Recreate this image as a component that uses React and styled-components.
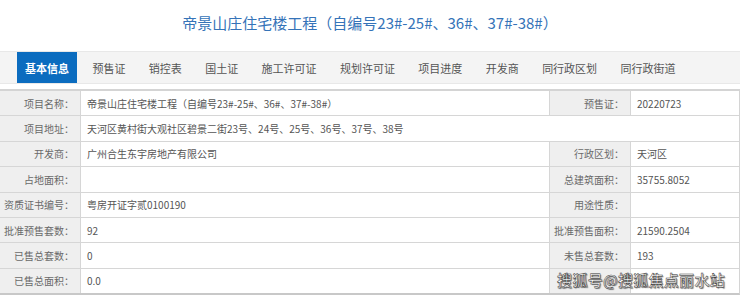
import React from 'react';
import styled, { createGlobalStyle } from 'styled-components';

const GlobalStyle = createGlobalStyle`
  html, body {
    margin: 0;
    padding: 0;
    background: #fff;
  }
  body {
    font-family: "Noto Sans CJK SC", "Noto Sans", sans-serif;
    width: 740px;
    height: 295px;
    overflow: hidden;
  }
`;

const Page = styled.div`
  position: relative;
  width: 740px;
  height: 295px;
  overflow: hidden;
`;

const Title = styled.h1`
  margin: 0;
  height: 51px;
  line-height: 46px;
  text-align: center;
  font-size: 15px;
  font-weight: 400;
  color: #3573b8;
`;

const TabBar = styled.div`
  display: flex;
  align-items: stretch;
  height: 31px;
  padding-left: 17px;
  background: #f4f4f4;
  border-top: 1px solid #e8e8e8;
  border-bottom: 1px solid #e8e8e8;
`;

const Tab = styled.div`
  display: flex;
  align-items: center;
  padding: 0 8px;
  margin-right: 7.4px;
  font-size: 11px;
  color: ${({ active }) => (active ? '#fff' : '#555')};
  font-weight: ${({ active }) => (active ? 700 : 400)};
  background: ${({ active }) => (active ? '#0b6cbf' : 'transparent')};
`;

const Table = styled.div`
  margin: 5px 0 0 -1px;
  width: 739px;
  border-top: 2px solid #d4d4d4;
  border-bottom: 2px solid #c8c8c8;
  border-left: 1px solid #d4d4d4;
  border-right: 1px solid #d4d4d4;
`;

const Row = styled.div`
  display: grid;
  grid-template-columns: ${({ wide }) => (wide ? '81px 1fr' : '81px 468px 82px 1fr')};
  height: 24.4px;
  border-bottom: 1px solid #d6d6d6;
  &:last-child {
    border-bottom: none;
  }
`;

const Label = styled.div`
  display: flex;
  align-items: center;
  justify-content: flex-end;
  padding-right: 6px;
  background: #efefef;
  border-right: 1px solid #d6d6d6;
  border-left: ${({ second }) => (second ? '1px solid #d6d6d6' : 'none')};
  font-size: 10px;
  color: #6a6a6a;
  white-space: nowrap;
`;

const Value = styled.div`
  display: flex;
  align-items: center;
  padding-left: 6px;
  font-size: 10px;
  color: #555;
  white-space: nowrap;
  overflow: hidden;
`;

const Watermark = styled.div`
  position: absolute;
  right: 15px;
  bottom: 5px;
  font-size: 15px;
  font-weight: 500;
  letter-spacing: 0.3px;
  color: #fff;
  -webkit-text-stroke: 0.5px #333;
  text-shadow: 1px 1px 1px rgba(0, 0, 0, 0.5);
`;

const tabs = ['基本信息', '预售证', '销控表', '国土证', '施工许可证', '规划许可证', '项目进度', '开发商', '同行政区划', '同行政街道'];

const rows = [
  ['项目名称', '帝景山庄住宅楼工程（自编号23#-25#、36#、37#-38#）', '预售证', '20220723'],
  ['项目地址', '天河区黄村街大观社区碧景二街23号、24号、25号、36号、37号、38号'],
  ['开发商', '广州合生东宇房地产有限公司', '行政区划', '天河区'],
  ['占地面积', '', '总建筑面积', '35755.8052'],
  ['资质证书编号', '粤房开证字贰0100190', '用途性质', ''],
  ['批准预售套数', '92', '批准预售面积', '21590.2504'],
  ['已售总套数', '0', '未售总套数', '193'],
  ['已售总面积', '0.0', '', ''],
];

export default function App() {
  return (
    <Page>
      <GlobalStyle />
      <Title>帝景山庄住宅楼工程（自编号23#-25#、36#、37#-38#）</Title>
      <TabBar>
        {tabs.map((t, i) => (
          <Tab key={t} active={i === 0}>{t}</Tab>
        ))}
      </TabBar>
      <Table>
        {rows.map(([l1, v1, l2, v2]) => (
          <Row key={l1} wide={l2 === undefined}>
            <Label>{l1}：</Label>
            <Value>{v1}</Value>
            {l2 !== undefined && (
              <>
                <Label second>{l2 ? `${l2}：` : ''}</Label>
                <Value>{v2}</Value>
              </>
            )}
          </Row>
        ))}
      </Table>
      <Watermark>搜狐号@搜狐焦点丽水站</Watermark>
    </Page>
  );
}
